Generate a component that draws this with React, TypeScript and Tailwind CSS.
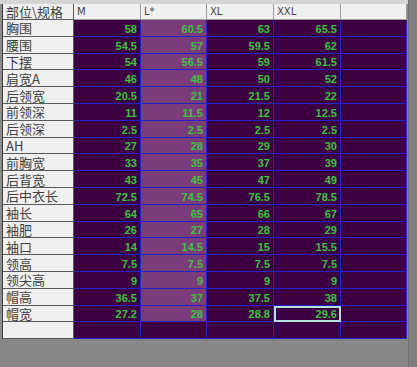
import React from 'react'

const rows: [string, string, string, string, string][] = [
  ['胸围', '58', '60.5', '63', '65.5'],
  ['腰围', '54.5', '57', '59.5', '62'],
  ['下摆', '54', '56.5', '59', '61.5'],
  ['肩宽A', '46', '48', '50', '52'],
  ['后领宽', '20.5', '21', '21.5', '22'],
  ['前领深', '11', '11.5', '12', '12.5'],
  ['后领深', '2.5', '2.5', '2.5', '2.5'],
  ['AH', '27', '28', '29', '30'],
  ['前胸宽', '33', '35', '37', '39'],
  ['后背宽', '43', '45', '47', '49'],
  ['后中衣长', '72.5', '74.5', '76.5', '78.5'],
  ['袖长', '64', '65', '66', '67'],
  ['袖肥', '26', '27', '28', '29'],
  ['袖口', '14', '14.5', '15', '15.5'],
  ['领高', '7.5', '7.5', '7.5', '7.5'],
  ['领尖高', '9', '9', '9', '9'],
  ['帽高', '36.5', '37', '37.5', '38'],
  ['帽宽', '27.2', '28', '28.8', '29.6'],
]

const heads = ['M', 'L*', 'XL', 'XXL', '']

const Label = ({ text }: { text: string }) => (
  <div className="bg-[#f0f0f0] border-r border-b border-[#5a5a5a] pl-[3px] flex items-center">
    <span className="text-[13px] leading-[13px] text-[#404040] font-['Noto_Sans_CJK_SC',sans-serif] whitespace-nowrap">
      {text}
    </span>
  </div>
)

const Num = ({ v, light, sel }: { v: string; light?: boolean; sel?: boolean }) => (
  <div
    className={
      'border-r border-b border-[#2424c8] flex items-end justify-end pr-[3px] text-[11px] leading-[14px] font-bold text-[#3fc23f] font-["Liberation_Sans",sans-serif] ' +
      (light ? 'bg-[#7b3c7c] ' : 'bg-[#3c0042] ') +
      (sel ? 'outline-2 outline-[#b4e2da] -outline-offset-2' : '')
    }
  >
    {v}
  </div>
)

const App = () => {
  return (
    <div className="w-[417px] h-[367px] bg-[#878787] flex overflow-hidden">
      <div className="w-[408px] flex flex-col">
        <div className="h-[4px] bg-[#d4d4d4]" />
        <div className="flex">
          <div className="w-[3px] bg-[#8c8c8c] border-r border-[#3c3c3c]" />
          <div className="grid grid-cols-[71px_67px_66px_67px_67px_66px] grid-rows-[16px_repeat(19,16.8px)]">
            <Label text="部位\规格" />
            {heads.map((h, i) => (
              <div
                key={i}
                className="bg-[#f0f0f0] border-r border-b border-[#9a9a9a] pl-[3px] flex items-center text-[10px] leading-[14px] text-[#444] font-['DejaVu_Sans',sans-serif]"
              >
                {h}
              </div>
            ))}
            {rows.map((r, i) => (
              <React.Fragment key={i}>
                <Label text={r[0]} />
                <Num v={r[1]} />
                <Num v={r[2]} light />
                <Num v={r[3]} />
                <Num v={r[4]} sel={i === rows.length - 1} />
                <Num v="" />
              </React.Fragment>
            ))}
            <Label text="" />
            <Num v="" />
            <Num v="" />
            <Num v="" />
            <Num v="" />
            <Num v="" />
          </div>
        </div>
      </div>
      <div className="w-[9px] bg-[#7f7f7f] border-l border-[#6e6e6e]" />
    </div>
  )
}

export default App
